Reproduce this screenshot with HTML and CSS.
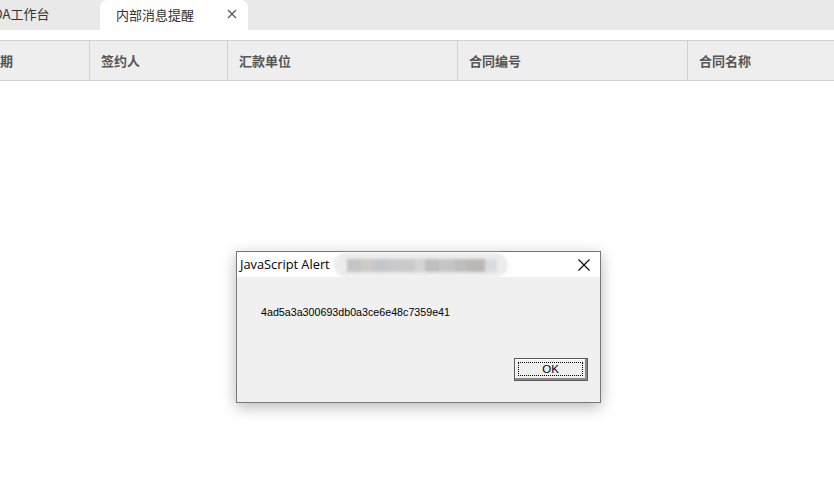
FILE: index.html
```html
<!DOCTYPE html>
<html lang="zh-CN">
<head>
<meta charset="utf-8">
<title>内部消息提醒</title>
<link rel="stylesheet" href="styles.css">
</head>
<body>
<div class="page">
  <div class="tabbar">
    <div class="tabs">
      <div class="tab">OA工作台</div>
      <div class="tab active">
        <span class="tab-label">内部消息提醒</span>
        <svg class="tab-close" width="10" height="10" viewBox="0 0 10 10"><path d="M1 1L9 9M9 1L1 9" stroke="#555" stroke-width="1.2" fill="none"/></svg>
      </div>
    </div>
  </div>
  <div class="gap"></div>
  <div class="grid-head">
    <div class="cols">
      <div class="col c1">日期</div>
      <div class="col c2">签约人</div>
      <div class="col c3">汇款单位</div>
      <div class="col c4">合同编号</div>
      <div class="col c5">合同名称</div>
    </div>
  </div>

  <div class="dialog">
    <div class="dlg-title">
      <span class="dlg-title-text">JavaScript Alert</span>
      <div class="blur">
        <div class="blur-blocks">
          <i class="b1"></i><i class="b2"></i><i class="b3"></i><i class="b4"></i><i class="b5"></i><i class="b6"></i><i class="b7"></i><i class="b8"></i><i class="b9"></i><i class="b10"></i><i class="b11"></i>
        </div>
      </div>
      <svg class="dlg-close" width="12" height="12" viewBox="0 0 12 12"><path d="M0.5 0.5L11.5 11.5M11.5 0.5L0.5 11.5" stroke="#000" stroke-width="1.1" fill="none"/></svg>
    </div>
    <div class="dlg-body">
      <div class="dlg-msg">4ad5a3a300693db0a3ce6e48c7359e41</div>
      <div class="dlg-actions">
        <button class="ok"><span class="focus">OK</span></button>
      </div>
    </div>
  </div>
</div>
</body>
</html>
```

FILE: styles.css
```css
html, body {
  margin: 0;
  padding: 0;
  background: #fff;
}
.page {
  position: relative;
  width: 834px;
  height: 500px;
  overflow: hidden;
  font-family: "Noto Sans CJK SC", "Noto Sans", sans-serif;
}
.tabbar {
  height: 30px;
  background: #e9e9e9;
  overflow: hidden;
}
.tabs {
  display: flex;
  margin-left: -23px;
  height: 30px;
}
.tab {
  width: 123px;
  box-sizing: border-box;
  padding-left: 16px;
  font-size: 13px;
  line-height: 28px;
  color: #333;
  white-space: nowrap;
}
.tab.active {
  width: 148px;
  background: #fff;
  border-radius: 7px 7px 0 0;
  display: flex;
  align-items: center;
  justify-content: space-between;
  padding-right: 11px;
  line-height: normal;
}
.tab-label {
  margin-top: -2px;
}
.tab-close {
  display: block;
  margin-top: -2px;
}
.gap {
  height: 10px;
}
.grid-head {
  height: 39px;
  border-top: 1px solid #d2d2d2;
  border-bottom: 1px solid #d2d2d2;
  background: #eeeeee;
  overflow: hidden;
}
.cols {
  display: flex;
  margin-left: -24px;
  height: 39px;
}
.col {
  flex: none;
  box-sizing: border-box;
  padding-left: 11px;
  border-right: 1px solid #d2d2d2;
  font-size: 13px;
  font-weight: bold;
  color: #555;
  line-height: 39px;
  white-space: nowrap;
}
.c1 { width: 114px; }
.c2 { width: 138px; }
.c3 { width: 230px; }
.c4 { width: 230px; }
.c5 { width: 200px; border-right: none; }

.dialog {
  position: absolute;
  left: 236px;
  top: 251px;
  width: 365px;
  height: 152px;
  box-sizing: border-box;
  border: 1px solid #787878;
  background: #f0f0f0;
  box-shadow: 0 4px 14px rgba(0, 0, 0, 0.28);
  display: flex;
  flex-direction: column;
}
.dlg-title {
  height: 25px;
  background: #fff;
  display: flex;
  align-items: center;
  position: relative;
  padding-left: 3px;
}
.dlg-title-text {
  font-family: "Open Sans", "Liberation Sans", sans-serif;
  font-size: 12.8px;
  color: #000;
  margin-top: -1px;
}
.blur {
  position: absolute;
  left: 97px;
  top: 1px;
  width: 174px;
  height: 24px;
  border-radius: 12px;
  background: #ececec;
  filter: blur(1.5px);
}
.blur-blocks {
  display: flex;
  margin: 6px 0 0 13px;
  height: 13px;
}
.blur-blocks i {
  display: block;
  height: 13px;
  width: 14px;
}
.b1 { background: #c4c4c4; }
.b2 { background: #cfcac5; width: 12px !important; }
.b3 { background: #c2c6ca; }
.b4 { background: #c9c9c9; }
.b5 { background: #cacaca; }
.b6 { background: #d4d4d0; width: 10px !important; }
.b7 { background: #bfbfc1; }
.b8 { background: #c5c5c5; width: 16px !important; }
.b9 { background: #bdbdbd; width: 12px !important; }
.b10 { background: #bab8b6; width: 18px !important; }
.b11 { background: #d8dce0; width: 12px !important; }
.dlg-close {
  position: absolute;
  right: 10px;
  top: 7px;
}
.dlg-body {
  flex: 1;
  display: flex;
  flex-direction: column;
}
.dlg-msg {
  margin: 29px 0 0 24px;
  font-family: "Liberation Sans", sans-serif;
  font-size: 10.7px;
  color: #000;
}
.dlg-actions {
  display: flex;
  justify-content: flex-end;
  padding: 40px 12px 0 0;
}
.ok {
  width: 74px;
  height: 23px;
  box-sizing: border-box;
  margin: 0;
  padding: 0;
  background: #efefef;
  border: 1px solid #5a5a5a;
  box-shadow: inset -2px -2px 0 #8a8a8a, inset 1px 1px 0 #fff;
  font-family: "Liberation Sans", sans-serif;
  font-size: 11.5px;
  color: #000;
  display: flex;
}
.focus {
  flex: 1;
  margin: 3px 4px 4px 3px;
  border: 1px dotted #000;
  line-height: 12px;
  text-align: center;
}
```
